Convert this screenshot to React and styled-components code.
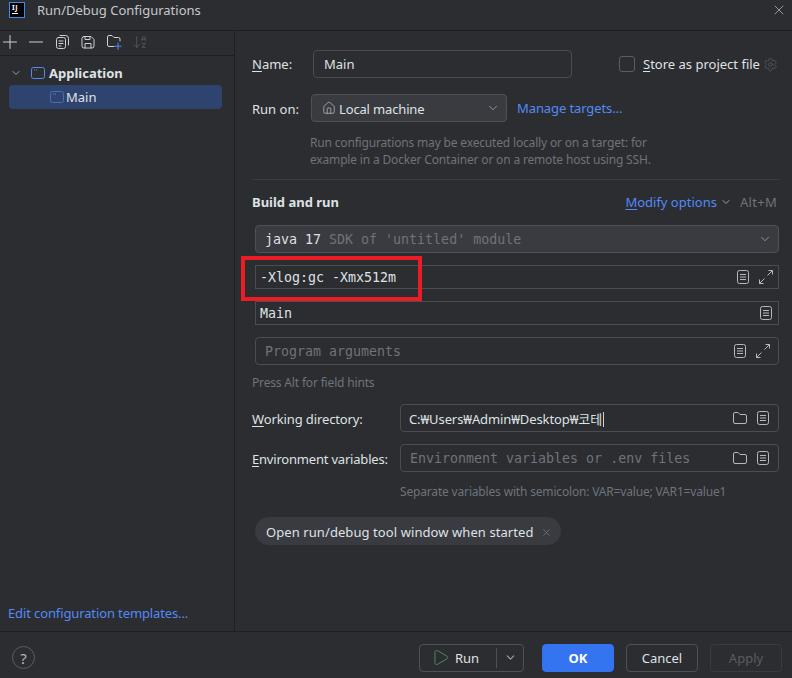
import styled, { createGlobalStyle } from 'styled-components';
import { ArrowDownAZ, ChevronDown, House, Play, Settings, X } from 'lucide-react';

const GlobalStyle = createGlobalStyle`
  html, body {
    margin: 0;
    padding: 0;
    background: #2b2d30;
  }
  * {
    box-sizing: border-box;
  }
`;

const sans = `"Noto Sans", "Noto Sans CJK KR", sans-serif`;
const mono = `"DejaVu Sans Mono", "Liberation Mono", monospace`;

const Window = styled.div`
  position: relative;
  width: 792px;
  height: 678px;
  display: flex;
  flex-direction: column;
  overflow: hidden;
  background: #2b2d30;
  color: #dfe1e5;
  font-family: ${sans};
  font-size: 13px;
`;

const TitleBar = styled.div`
  flex: 0 0 31px;
  display: flex;
  align-items: center;
  justify-content: space-between;
  padding: 0 5px 10px 9px;
  border-bottom: 1px solid #1e1f22;
`;

const TitleGroup = styled.div`
  display: flex;
  align-items: center;
  gap: 12px;
  color: #c6c8ce;
`;

const Logo = styled.div`
  width: 16px;
  height: 16px;
  background: #000;
  border: 1px solid #3c8cf0;
  color: #fff;
  font: bold 7px/8px ${sans};
  padding: 1px 0 0 2px;
  letter-spacing: 0.5px;

  &::after {
    content: "";
    display: block;
    width: 6px;
    height: 1px;
    margin-top: 1px;
    background: #fff;
  }
`;

const Body = styled.div`
  flex: 1;
  display: flex;
  min-height: 0;
`;

const Sidebar = styled.div`
  flex: 0 0 235px;
  display: flex;
  flex-direction: column;
  border-right: 1px solid #1e1f22;
`;

const Toolbar = styled.div`
  flex: 0 0 25px;
  display: flex;
  align-items: center;
  gap: 10px;
  padding: 0 0 3px 2px;
  border-bottom: 1px solid #1e1f22;
  color: #ced0d6;
`;

const Tree = styled.div`
  flex: 1;
  padding: 5px 12px 0 9px;
`;

const TreeRow = styled.div`
  height: 24px;
  display: flex;
  align-items: center;
  gap: ${({ $selected }) => ($selected ? '1px' : '3px')};
  padding-left: ${({ $selected }) => ($selected ? '40px' : '1px')};
  border-radius: 4px;
  background: ${({ $selected }) => ($selected ? '#2e436e' : 'transparent')};
  font-weight: ${({ $selected }) => ($selected ? 400 : 700)};
`;

const TreeChevron = styled.span`
  display: flex;
  margin-right: 5px;
  color: #9da0a8;
`;

const SideLink = styled.a`
  padding: 0 0 9px 8px;
  color: #548af7;
  line-height: 18px;
  letter-spacing: -0.12px;
`;

const Content = styled.div`
  flex: 1;
  min-width: 0;
  padding: 19px 13px 0 17px;
  display: flex;
  flex-direction: column;
`;

const Row = styled.div`
  display: flex;
  align-items: center;
  margin-top: ${({ $top }) => $top || 0}px;
`;

const Label = styled.label`
  flex: 0 0 ${({ $width }) => $width}px;
  padding-top: ${({ $nudge }) => $nudge || 0}px;
  color: #dfe1e5;
  letter-spacing: ${({ $spacing }) => $spacing || 0}px;
`;

const Mnemonic = styled.span`
  text-decoration: underline;
  text-underline-offset: 2px;
`;

const Field = styled.div`
  flex: ${({ $width }) => ($width ? `0 0 ${$width}px` : 1)};
  height: ${({ $height }) => $height || 28}px;
  display: flex;
  align-items: center;
  gap: ${({ $gap }) => $gap || 8}px;
  margin-left: ${({ $left }) => $left || 0}px;
  padding: 0 ${({ $right }) => $right || 6}px 0 ${({ $pad }) => $pad || 10}px;
  border: 1px solid ${({ $combo }) => ($combo ? '#4e5157' : '#4b4d52')};
  border-radius: ${({ $square }) => ($square ? 0 : 4)}px;
  background: ${({ $combo }) => ($combo ? '#393b40' : 'transparent')};
`;

const FieldText = styled.span`
  flex: 1;
  min-width: 0;
  padding-top: ${({ $nudge }) => $nudge || 0}px;
  white-space: nowrap;
  color: #dfe1e5;
  letter-spacing: ${({ $spacing }) => $spacing || 0}px;
`;

const MonoText = styled.span`
  flex: 1;
  min-width: 0;
  white-space: pre;
  font-family: ${mono};
  font-size: 13.3px;
  color: ${({ $muted }) => ($muted ? '#6f737a' : '#dfe1e5')};
`;

const Dim = styled.span`
  color: #6f737a;
`;

const Caret = styled.span`
  display: inline-block;
  width: 1px;
  height: 15px;
  margin-left: 1px;
  vertical-align: -3px;
  background: #ced0d6;
`;

const Checkbox = styled.span`
  width: 16px;
  height: 16px;
  margin-left: 47px;
  border: 1px solid #5a5d63;
  border-radius: 3px;
`;

const CheckLabel = styled.span`
  margin-left: 8px;
  white-space: nowrap;
`;

const GearIcon = styled(Settings)`
  margin-left: 3px;
`;

const HomeIcon = styled(House)`
  margin-right: -5px;
`;

const OptionsChevron = styled(ChevronDown)`
  margin-left: 3px;
`;

const Link = styled.a`
  margin-left: 10px;
  color: #548af7;
  white-space: nowrap;
  letter-spacing: -0.1px;
`;

const Hint = styled.div`
  margin: ${({ $top }) => $top || 0}px 0 0 ${({ $left }) => $left || 0}px;
  color: #6f737a;
  font-size: 12px;
  line-height: 17px;
  letter-spacing: -0.17px;
`;

const Divider = styled.div`
  height: 1px;
  margin-top: 11px;
  background: #393b40;
`;

const SectionHead = styled.div`
  display: flex;
  align-items: center;
  height: 18px;
  margin-top: 13px;
`;

const SectionTitle = styled.div`
  flex: 1;
  font-weight: 700;
`;

const SectionLink = styled.a`
  color: #548af7;
`;

const Shortcut = styled.span`
  margin: 0 2px 0 8px;
  color: #6f737a;
  letter-spacing: 0.3px;
`;

const Chip = styled.div`
  align-self: flex-start;
  height: 28px;
  display: flex;
  align-items: center;
  gap: 7px;
  margin: 17px 0 0 3px;
  padding: 2px 9px 0 11px;
  border-radius: 14px;
  background: #393b40;
  letter-spacing: 0.08px;
`;

const Footer = styled.div`
  flex: 0 0 47px;
  display: flex;
  align-items: center;
  padding: 5px 10px 0 12px;
  border-top: 1px solid #1e1f22;
`;

const Help = styled.div`
  width: 23px;
  height: 23px;
  margin-right: auto;
  display: flex;
  align-items: center;
  justify-content: center;
  border: 1px solid #5a5d63;
  border-radius: 50%;
  color: #b4b8bf;
  font-size: 15px;
`;

const Button = styled.button`
  width: 72px;
  height: 28px;
  margin-left: 12px;
  padding: 0;
  border: 1px solid ${({ $primary, $disabled }) => ($primary ? '#3574f0' : $disabled ? '#393b40' : '#4e5157')};
  border-radius: 4px;
  background: ${({ $primary }) => ($primary ? '#3574f0' : 'transparent')};
  color: ${({ $primary, $disabled }) => ($primary ? '#fff' : $disabled ? '#5a5d63' : '#dfe1e5')};
  font: ${({ $primary }) => ($primary ? 700 : 400)} 13px ${sans};
`;

const SplitButton = styled.div`
  width: 105px;
  height: 28px;
  display: flex;
  align-items: center;
  margin-right: 6px;
  border: 1px solid #4e5157;
  border-radius: 4px;
`;

const SplitMain = styled.div`
  flex: 1;
  height: 100%;
  display: flex;
  align-items: center;
  gap: 5px;
  padding-left: 11px;
`;

const SplitDivider = styled.div`
  width: 1px;
  height: 20px;
  background: #4e5157;
`;

const SplitArrow = styled.div`
  flex: 0 0 26px;
  display: flex;
  justify-content: center;
  color: #9da0a8;
`;

const Highlight = styled.div`
  position: absolute;
  left: 241px;
  top: 256px;
  width: 181px;
  height: 45px;
  border: 4px solid #ed1c24;
  pointer-events: none;
`;

const IconButton = styled.span`
  width: 16px;
  height: 16px;
  display: flex;
  color: ${({ $muted }) => ($muted ? '#5f6167' : '#ced0d6')};
`;

function ToolIcon({ children }) {
  return (
    <svg width="16" height="16" viewBox="0 0 16 16" fill="none" stroke="currentColor" strokeLinecap="round" strokeLinejoin="round">
      {children}
    </svg>
  );
}

function WindowIcon({ size = 16, color = '#548af7' }) {
  return (
    <svg width={size} height={size} viewBox="0 0 16 16" fill="none" stroke={color}>
      <rect x="1.5" y="2.5" width="13" height="11" rx="2" />
      <path d="M4 5h1M6 5h1" stroke="#6f8fd0" />
    </svg>
  );
}

function DocIcon() {
  return (
    <svg width="14" height="14" viewBox="0 0 14 14" fill="none" stroke="#b4b8bf">
      <rect x="1.5" y="0.5" width="11" height="13" rx="2" />
      <path d="M4 4.5h6M4 7h6M4 9.5h6" />
    </svg>
  );
}

function ExpandIcon() {
  return (
    <svg width="16" height="16" viewBox="0 0 16 16" fill="none" stroke="#b4b8bf">
      <path d="M9.5 6.5l5-5M10.5 1.5h4v4M6.5 9.5l-5 5M5.5 14.5h-4v-4" />
    </svg>
  );
}

function FolderIcon() {
  return (
    <svg width="16" height="14" viewBox="0 0 16 14" fill="none" stroke="#b4b8bf">
      <path d="M1.5 3a1.5 1.5 0 0 1 1.5-1.5h3l2 2h5A1.5 1.5 0 0 1 14.5 5v6a1.5 1.5 0 0 1-1.5 1.5H3A1.5 1.5 0 0 1 1.5 11z" />
    </svg>
  );
}

export default function App() {
  return (
    <Window>
      <GlobalStyle />
      <TitleBar>
        <TitleGroup>
          <Logo>IJ</Logo>
          <span>Run/Debug Configurations</span>
        </TitleGroup>
        <X size={16} color="#ced0d6" strokeWidth={1} />
      </TitleBar>
      <Body>
        <Sidebar>
          <Toolbar>
            <IconButton>
              <ToolIcon><path d="M1.5 8h13M8 1.5v13" /></ToolIcon>
            </IconButton>
            <IconButton>
              <ToolIcon><path d="M1.5 8h13" /></ToolIcon>
            </IconButton>
            <IconButton>
              <ToolIcon>
                <rect x="2.5" y="3.5" width="9" height="11" rx="2" />
                <path d="M5 7h4M5 9.5h4M5 12h2M6 1.5h5.5a3 3 0 0 1 3 3V11" />
              </ToolIcon>
            </IconButton>
            <IconButton>
              <ToolIcon>
                <path d="M4 2.5h7l3 3V12a2 2 0 0 1-2 2H4a2 2 0 0 1-2-2V4.5a2 2 0 0 1 2-2z" />
                <path d="M5 2.5v3h5v-3M5 14V9.5h6V14" />
              </ToolIcon>
            </IconButton>
            <IconButton>
              <ToolIcon>
                <path d="M8 12.5H3A1.5 1.5 0 0 1 1.5 11V3A1.5 1.5 0 0 1 3 1.5h3l2 2h4.5A1.5 1.5 0 0 1 14 5v2" />
                <path d="M12 9v6.5M8.8 12.2h6.4" stroke="#548af7" />
              </ToolIcon>
            </IconButton>
            <IconButton $muted><ArrowDownAZ size={16} strokeWidth={1.1} /></IconButton>
          </Toolbar>
          <Tree>
            <TreeRow>
              <TreeChevron><ChevronDown size={12} /></TreeChevron>
              <WindowIcon />
              <span>Application</span>
            </TreeRow>
            <TreeRow $selected>
              <WindowIcon color="#4a6db5" />
              <span>Main</span>
            </TreeRow>
          </Tree>
          <SideLink>Edit configuration templates...</SideLink>
        </Sidebar>
        <Content>
          <Row>
            <Label $width={61}><Mnemonic>N</Mnemonic>ame:</Label>
            <Field $width={259}>
              <FieldText>Main</FieldText>
            </Field>
            <Checkbox />
            <CheckLabel><Mnemonic>S</Mnemonic>tore as project file</CheckLabel>
            <GearIcon size={15} color="#5f6167" strokeWidth={1.1} />
          </Row>
          <Row $top={16}>
            <Label $width={59} $nudge={2}>Run on:</Label>
            <Field $width={196} $combo $pad={10}>
              <HomeIcon size={14} color="#ced0d6" strokeWidth={1.1} />
              <FieldText $nudge={2} $spacing={-0.15}>Local machine</FieldText>
              <ChevronDown size={14} color="#b4b8bf" strokeWidth={1.2} />
            </Field>
            <Link>Manage targets...</Link>
          </Row>
          <Hint $top={12} $left={58}>
            Run configurations may be executed locally or on a target: for<br />
            example in a Docker Container or on a remote host using SSH.
          </Hint>
          <Divider />
          <SectionHead>
            <SectionTitle>Build and run</SectionTitle>
            <SectionLink><Mnemonic>M</Mnemonic>odify options</SectionLink>
            <OptionsChevron size={12} color="#9da0a8" />
            <Shortcut>Alt+M</Shortcut>
          </SectionHead>
          <Row $top={14}>
            <Field $left={3} $combo $pad={9}>
              <MonoText>java 17 <Dim>SDK of 'untitled' module</Dim></MonoText>
              <ChevronDown size={14} color="#b4b8bf" strokeWidth={1.2} />
            </Field>
          </Row>
          <Row $top={12}>
            <Field $left={3} $height={24} $square $pad={4} $right={4}>
              <MonoText>-Xlog:gc -Xmx512m</MonoText>
              <DocIcon />
              <ExpandIcon />
            </Field>
          </Row>
          <Row $top={12}>
            <Field $left={3} $height={24} $square $pad={4} $right={5}>
              <MonoText>Main</MonoText>
              <DocIcon />
            </Field>
          </Row>
          <Row $top={12}>
            <Field $left={3} $pad={9} $right={7}>
              <MonoText $muted>Program arguments</MonoText>
              <DocIcon />
              <ExpandIcon />
            </Field>
          </Row>
          <Hint $top={9}>Press Alt for field hints</Hint>
          <Row $top={13}>
            <Label $width={148} $spacing={-0.12} $nudge={2}><Mnemonic>W</Mnemonic>orking directory:</Label>
            <Field $pad={8} $right={8}>
              <FieldText $spacing={-0.1}>C:₩Users₩Admin₩Desktop₩코테<Caret /></FieldText>
              <FolderIcon />
              <DocIcon />
            </Field>
          </Row>
          <Row $top={12}>
            <Label $width={148} $spacing={-0.2} $nudge={2}><Mnemonic>E</Mnemonic>nvironment variables:</Label>
            <Field $pad={9} $right={8}>
              <MonoText $muted>Environment variables or .env files</MonoText>
              <FolderIcon />
              <DocIcon />
            </Field>
          </Row>
          <Hint $top={11} $left={148}>Separate variables with semicolon: VAR=value; VAR1=value1</Hint>
          <Chip>
            <span>Open run/debug tool window when started</span>
            <X size={11} color="#6f737a" />
          </Chip>
        </Content>
      </Body>
      <Footer>
        <Help>?</Help>
        <SplitButton>
          <SplitMain>
            <Play size={19} color="#57965c" strokeWidth={1.1} />
            <span>Run</span>
          </SplitMain>
          <SplitDivider />
          <SplitArrow><ChevronDown size={13} /></SplitArrow>
        </SplitButton>
        <Button $primary>OK</Button>
        <Button>Cancel</Button>
        <Button $disabled>Apply</Button>
      </Footer>
      <Highlight />
    </Window>
  );
}
